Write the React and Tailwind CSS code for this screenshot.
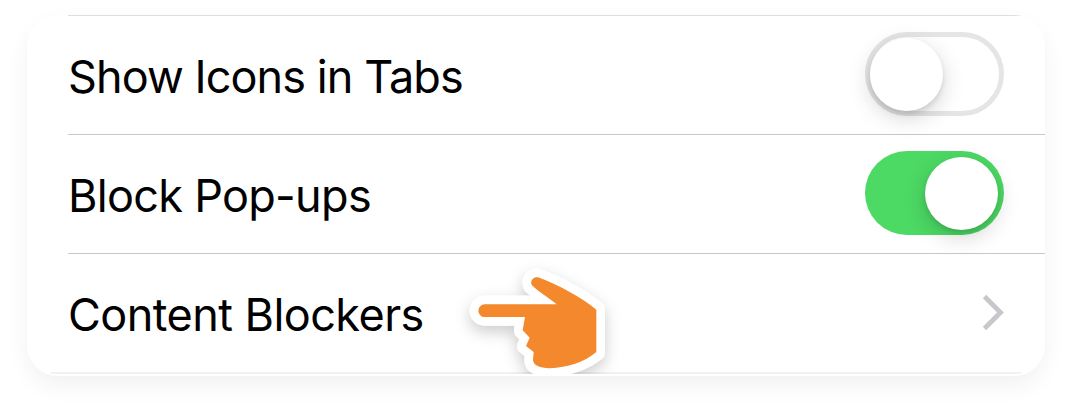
function Toggle({ on }) {
  return (
    <div
      className={
        on
          ? "flex h-[84px] w-[139px] items-center justify-end rounded-full bg-[#4cd964] pr-[6px]"
          : "flex h-[84px] w-[139px] items-center justify-start rounded-full border-[5.5px] border-[#e5e5e5] bg-white"
      }
    >
      <div className="h-[73px] w-[73px] rounded-full bg-white shadow-[0_7px_22px_rgba(0,0,0,0.17),0_3px_5px_rgba(0,0,0,0.1)]" />
    </div>
  );
}

function Row({ label, tracking, border, children }) {
  return (
    <div className={`ml-[41px] flex justify-between pr-[41px] ${border}`}>
      <span className={`pt-[34px] text-[45px] leading-[54px] whitespace-nowrap text-black ${tracking}`}>
        {label}
      </span>
      {children}
    </div>
  );
}

const HAND =
  "M320 133H104a19 19 0 0 0 0 38H225L218 211L239 233L228 258L251 276L249 301C251 317 271 325 300 324.500C351 323 404 306 439 276V149C395 113 325 74 264 52C250 48 238 65 246 76C264 94 292 111 320 133Z";

function PointingHand() {
  return (
    <svg
      className="absolute top-[245px] left-[423px] h-[114px] w-[190px]"
      viewBox="0 0 570 342"
      aria-hidden="true"
    >
      <defs>
        <filter id="hand-shadow" x="-20%" y="-20%" width="140%" height="150%">
          <feDropShadow dx="0" dy="18" stdDeviation="22" floodColor="#000" floodOpacity="0.2" />
        </filter>
      </defs>
      <path
        d={HAND}
        fill="white"
        stroke="white"
        strokeWidth="52"
        strokeLinejoin="round"
        filter="url(#hand-shadow)"
      />
      <path d={HAND} fill="#f3882c" />
    </svg>
  );
}

export default function App() {
  return (
    <main className="h-[413px] w-[1072px] overflow-hidden bg-white pt-[15px] pl-[27px] font-['Inter',sans-serif]">
      <section className="relative h-[361px] w-[1018px] rounded-[31px] bg-white shadow-[0_10px_22px_rgba(0,0,0,0.055)]">
        <div className="h-full overflow-hidden rounded-[31px]">
          <div className="mr-[23px] ml-[41px] h-px bg-[#dfdfdf]" />
          <Row label="Show Icons in Tabs" tracking="tracking-[-0.92px]" border="h-[119px] border-b border-[#c8c7cc]">
            <div className="pt-[16px]">
              <Toggle />
            </div>
          </Row>
          <Row label="Block Pop-ups" tracking="tracking-[-0.7px]" border="h-[119px] border-b border-[#c8c7cc]">
            <div className="pt-[16px]">
              <Toggle on />
            </div>
          </Row>
          <Row label="Content Blockers" tracking="tracking-[-0.55px]" border="h-[118px]">
            <svg className="mt-[40px] h-[37px] w-[22px]" viewBox="0 0 22 37" fill="none" aria-hidden="true">
              <path d="M2.500 2.500L18.500 18.500L2.500 34.500" stroke="#c7c7cc" strokeWidth="4.800" />
            </svg>
          </Row>
          <div className="mx-[24px] h-[2px] bg-[#f1f1f1]" />
        </div>
        <PointingHand />
      </section>
    </main>
  );
}
